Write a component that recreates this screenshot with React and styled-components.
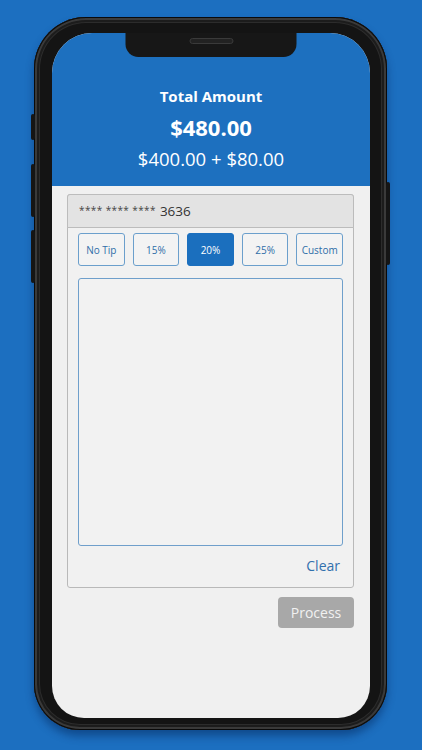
import React from "react";
import styled, { createGlobalStyle } from "styled-components";

const Global = createGlobalStyle`
  html, body { margin: 0; padding: 0; background: #1c6fc0; }
  body { font-family: "Open Sans", "Noto Sans", sans-serif; }
  * { box-sizing: border-box; }
`;

const Page = styled.div`
  width: 422px;
  height: 750px;
  padding: 17px 0 0 34px;
  background: #1c6fc0;
  overflow: hidden;
`;

const Frame = styled.div`
  position: relative;
  width: 353px;
  height: 713px;
  border-radius: 52px 52px 46px 46px;
  background: #141414;
  padding: 16px 17px 12px 18px;
  box-shadow:
    inset 0 0 0 1px #0a0a0a,
    inset 0 0 0 3px #3a3a3a,
    inset 0 0 0 5px #1c1c1c,
    inset 0 0 0 6px #2c2c2c,
    0 6px 8px rgba(0, 30, 80, 0.45);
`;

const SideButton = styled.div`
  position: absolute;
  width: 4px;
  top: ${(p) => p.$top}px;
  height: ${(p) => p.$h}px;
  ${(p) => (p.$right ? "right: -3px;" : "left: -3px;")}
  background: #151515;
  border-radius: 2px;
`;

const Screen = styled.div`
  position: relative;
  width: 100%;
  height: 100%;
  border-radius: 40px 40px 32px 32px;
  overflow: hidden;
  background: #f0f0f0;
  display: flex;
  flex-direction: column;
`;

const Notch = styled.div`
  position: absolute;
  top: 0;
  left: 50%;
  transform: translateX(-50%);
  width: 171px;
  height: 24px;
  background: #171717;
  border-radius: 0 0 13px 13px;
  display: flex;
  justify-content: center;
  padding-top: 5px;
`;

const Speaker = styled.div`
  width: 44px;
  height: 6px;
  border-radius: 3px;
  background: #222;
  border: 1px solid #3a3a3a;
`;

const Header = styled.div`
  height: 153px;
  flex: none;
  background: #1d70bf;
  color: #fff;
  display: flex;
  flex-direction: column;
  align-items: center;
  padding-top: 53px;
`;

const Title = styled.div`
  font-weight: 700;
  font-size: 15px;
  line-height: 20px;
`;

const Total = styled.div`
  font-weight: 700;
  font-size: 22px;
  line-height: 30px;
  margin-top: 6px;
`;

const Breakdown = styled.div`
  font-size: 18.5px;
  line-height: 24px;
  margin-top: 5px;
`;

const Body = styled.div`
  padding: 8px 16px 0 15px;
  display: flex;
  flex-direction: column;
  align-items: stretch;
`;

const Card = styled.div`
  border: 1px solid #b9b9b9;
  border-radius: 3px;
  background: #f1f1f1;
  display: flex;
  flex-direction: column;
  height: 394px;
`;

const CardHeader = styled.div`
  height: 34px;
  margin: -1px -1px 0;
  background: #e3e3e3;
  border: 1px solid #bcbcbc;
  border-radius: 3px 3px 0 0;
  display: flex;
  align-items: center;
  padding-left: 11px;
  font-size: 13.5px;
  color: #333;
`;

const Stars = styled.span`
  font-size: 10px;
  letter-spacing: 0.4px;
  margin-right: 4px;
  color: #444;
  position: relative;
  top: -1px;
`;

const Inner = styled.div`
  padding: 5px 10px 0 10px;
  display: flex;
  flex-direction: column;
`;

const TipRow = styled.div`
  display: flex;
  gap: 8px;
`;

const TipButton = styled.div`
  flex: 1;
  height: 33px;
  border: 1px solid ${(p) => (p.$active ? "#1b6fbe" : "#6b9fcc")};
  border-radius: 3px;
  background: ${(p) => (p.$active ? "#1b6fbe" : "#f3f3f3")};
  color: ${(p) => (p.$active ? "#fff" : "#2f6ea8")};
  font-size: 10px;
  display: flex;
  align-items: center;
  justify-content: center;
`;

const SignatureBox = styled.div`
  margin-top: 12px;
  height: 268px;
  border: 1px solid #6f9fcb;
  border-radius: 3px;
  background: #f2f2f2;
`;

const ClearRow = styled.div`
  display: flex;
  justify-content: flex-end;
  padding: 10px 3px 0 0;
`;

const ClearLink = styled.span`
  color: #3170ad;
  font-size: 14px;
  line-height: 20px;
`;

const Actions = styled.div`
  display: flex;
  justify-content: flex-end;
  margin-top: 9px;
`;

const ProcessButton = styled.div`
  width: 76px;
  height: 31px;
  border-radius: 4px;
  background: #a8a8a8;
  color: #f1f1f1;
  font-size: 14px;
  display: flex;
  align-items: center;
  justify-content: center;
`;

const tips = ["No Tip", "15%", "20%", "25%", "Custom"];

export default function App() {
  return (
    <>
      <Global />
      <Page>
        <Frame>
          <SideButton $top={97} $h={26} />
          <SideButton $top={147} $h={53} />
          <SideButton $top={213} $h={53} />
          <SideButton $right $top={165} $h={83} />
          <Screen>
            <Header>
              <Title>Total Amount</Title>
              <Total>$480.00</Total>
              <Breakdown>$400.00 + $80.00</Breakdown>
            </Header>
            <Body>
              <Card>
                <CardHeader>
                  <Stars>**** **** ****</Stars>3636
                </CardHeader>
                <Inner>
                  <TipRow>
                    {tips.map((t) => (
                      <TipButton key={t} $active={t === "20%"}>
                        {t}
                      </TipButton>
                    ))}
                  </TipRow>
                  <SignatureBox />
                  <ClearRow>
                    <ClearLink>Clear</ClearLink>
                  </ClearRow>
                </Inner>
              </Card>
              <Actions>
                <ProcessButton>Process</ProcessButton>
              </Actions>
            </Body>
            <Notch>
              <Speaker />
            </Notch>
          </Screen>
        </Frame>
      </Page>
    </>
  );
}
